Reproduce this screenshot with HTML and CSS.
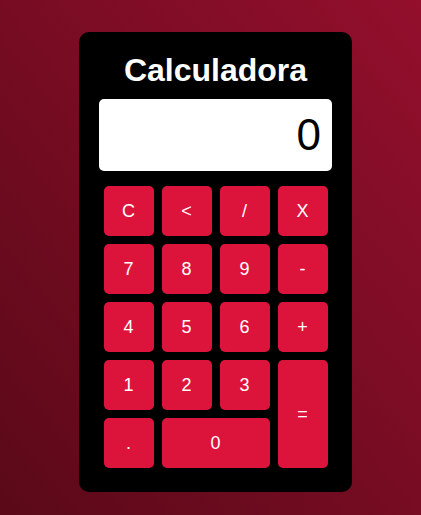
FILE: index.html
```html
<!DOCTYPE html>
<html lang="es">
<head>
<meta charset="utf-8">
<title>Calculadora</title>
<link rel="stylesheet" href="styles.css">
</head>
<body>
<div class="calc">
  <h1 class="title">Calculadora</h1>
  <div class="display">0</div>
  <div class="keys">
    <button class="key">C</button>
    <button class="key">&lt;</button>
    <button class="key">/</button>
    <button class="key">X</button>
    <button class="key">7</button>
    <button class="key">8</button>
    <button class="key">9</button>
    <button class="key">-</button>
    <button class="key">4</button>
    <button class="key">5</button>
    <button class="key">6</button>
    <button class="key">+</button>
    <button class="key">1</button>
    <button class="key">2</button>
    <button class="key">3</button>
    <button class="key key-eq">=</button>
    <button class="key">.</button>
    <button class="key key-zero">0</button>
  </div>
</div>
</body>
</html>
```
FILE: styles.css
```css
* { box-sizing: border-box; }
html, body { margin: 0; height: 100%; }
body {
  font-family: "Liberation Sans", Arial, sans-serif;
  background: linear-gradient(to top right, #5a0918, #930f2c);
  display: flex;
  align-items: center;
  justify-content: center;
  padding: 9px 0 0 10px;
  min-height: 515px;
}
.calc {
  width: 273px;
  background: #000;
  border-radius: 10px;
  padding: 20px 20px 24px 20px;
  display: flex;
  flex-direction: column;
}
.title {
  margin: 0 0 11px 0;
  font-size: 32px;
  line-height: 36px;
  font-weight: bold;
  color: #fff;
  text-align: center;
}
.display {
  height: 72px;
  background: #fff;
  border-radius: 5px;
  font-size: 44px;
  line-height: 72px;
  text-align: right;
  padding-right: 11px;
  color: #000;
  margin-bottom: 15px;
}
.keys {
  display: grid;
  grid-template-columns: repeat(4, 50px);
  grid-auto-rows: 50px;
  gap: 8px;
  justify-content: center;
}
.key {
  background: #dc143c;
  color: #fff;
  border: none;
  border-radius: 5px;
  font-family: "Liberation Sans", Arial, sans-serif;
  font-size: 18px;
  padding: 0;
}
.key-eq { grid-column: 4; grid-row: 4 / span 2; }
.key-zero { grid-column: 2 / span 2; }
```
